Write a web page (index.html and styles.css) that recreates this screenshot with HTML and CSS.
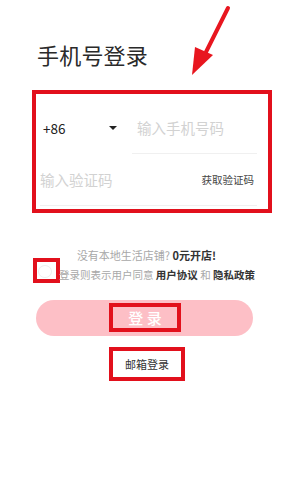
FILE: index.html
```html
<!DOCTYPE html>
<html lang="zh-CN">
<head>
<meta charset="utf-8">
<title>手机号登录</title>
<link rel="stylesheet" href="styles.css">
</head>
<body>
<div class="page">
  <h1 class="title">手机号登录</h1>
  <svg class="arrow" width="60" height="80" viewBox="0 0 60 80" aria-hidden="true">
    <line x1="48" y1="8" x2="26" y2="52" stroke="#e8161f" stroke-width="4" stroke-linecap="round"/>
    <polygon points="12,75 15,47 33,55" fill="#e8161f"/>
  </svg>

  <div class="form-box">
    <div class="row phone-row">
      <div class="country">
        <span class="code">+86</span>
        <span class="caret"></span>
      </div>
      <div class="input-wrap phone-input">
        <span class="placeholder">输入手机号码</span>
      </div>
    </div>
    <div class="row code-row">
      <span class="placeholder">输入验证码</span>
      <span class="get-code">获取验证码</span>
    </div>
  </div>

  <p class="promo">没有本地生活店铺? <b>0元开店!</b></p>
  <div class="agree-row">
    <span class="check-box"><span class="circle"></span></span>
    <p class="agree-text">登录则表示用户同意 <b>用户协议</b> 和 <b>隐私政策</b></p>
  </div>

  <div class="login-btn">
    <span class="login-label">登 录</span>
  </div>

  <div class="mail-login">邮箱登录</div>
</div>
</body>
</html>
```
FILE: styles.css
```css
* { box-sizing: border-box; }
html, body {
  margin: 0;
  padding: 0;
  background: #ffffff;
}
body {
  font-family: "Noto Sans CJK SC", "Noto Sans", sans-serif;
  color: #333;
  width: 291px;
  height: 500px;
  overflow: hidden;
}
.page {
  position: relative;
  padding-top: 41px;
}
.title {
  margin: 0 0 0 37px;
  font-size: 22px;
  line-height: 26px;
  font-weight: 400;
  color: #2a2a2a;
  letter-spacing: 0.2px;
}
.arrow {
  position: absolute;
  left: 180px;
  top: 0;
}
.form-box {
  margin: 23px 0 0 32px;
  width: 240px;
  border: 4px solid #e2101c;
  padding: 0 11px 3px 4px;
}
.row {
  display: flex;
  align-items: center;
}
.phone-row {
  height: 60px;
  align-items: stretch;
}
.country {
  width: 92px;
  display: flex;
  align-items: center;
  padding: 8px 0 0 3px;
  height: 59px;
}
.code {
  font-size: 13.5px;
  color: #222;
  line-height: 20px;
}
.caret {
  margin-left: 44px;
  width: 0;
  height: 0;
  border-left: 4px solid transparent;
  border-right: 4px solid transparent;
  border-top: 4px solid #222;
}
.phone-input {
  flex: 1;
  border-bottom: 1px solid #f0f0f0;
  display: flex;
  align-items: center;
  padding: 8px 0 0 5px;
}
.placeholder {
  font-size: 14.5px;
  line-height: 20px;
  color: #d2d2d2;
}
.code-row {
  justify-content: space-between;
  padding: 16px 3px 15px 0;
  border-bottom: 1px solid #f0f0f0;
}
.get-code {
  font-size: 10.5px;
  line-height: 20px;
  color: #444;
}
.promo {
  margin: 34px 0 0;
  text-align: center;
  font-size: 11px;
  line-height: 16px;
  color: #a8a8a8;
  padding-left: 2px;
}
.promo b, .agree-text b {
  color: #333;
  font-weight: 700;
}
.agree-row {
  display: flex;
  align-items: flex-start;
  margin: -5px 0 0 33px;
}
.check-box {
  width: 27px;
  height: 25px;
  border: 4px solid #e2101c;
  display: flex;
  align-items: flex-end;
  padding: 0 0 1px 1px;
  flex: none;
}
.circle {
  width: 14px;
  height: 13px;
  border: 1px solid #eeeeee;
  border-radius: 50%;
}
.agree-text {
  margin: 9px 0 0 -1px;
  font-size: 10.5px;
  line-height: 16px;
  color: #a8a8a8;
  white-space: nowrap;
}
.login-btn {
  margin: 17px 0 0 36px;
  width: 217px;
  height: 36px;
  border-radius: 18px;
  background: #fdbfc6;
  display: flex;
  justify-content: center;
  align-items: flex-start;
  padding-top: 3px;
}
.login-label {
  width: 72px;
  height: 29px;
  border: 4px solid #e2101c;
  color: #fff;
  font-size: 15px;
  line-height: 21px;
  text-align: center;
  font-weight: 500;
  margin-left: 1px;
}
.mail-login {
  margin: 11px 0 0 109px;
  width: 76px;
  height: 34px;
  border: 4px solid #e2101c;
  font-size: 11px;
  line-height: 26px;
  text-align: center;
  color: #333;
}
```
